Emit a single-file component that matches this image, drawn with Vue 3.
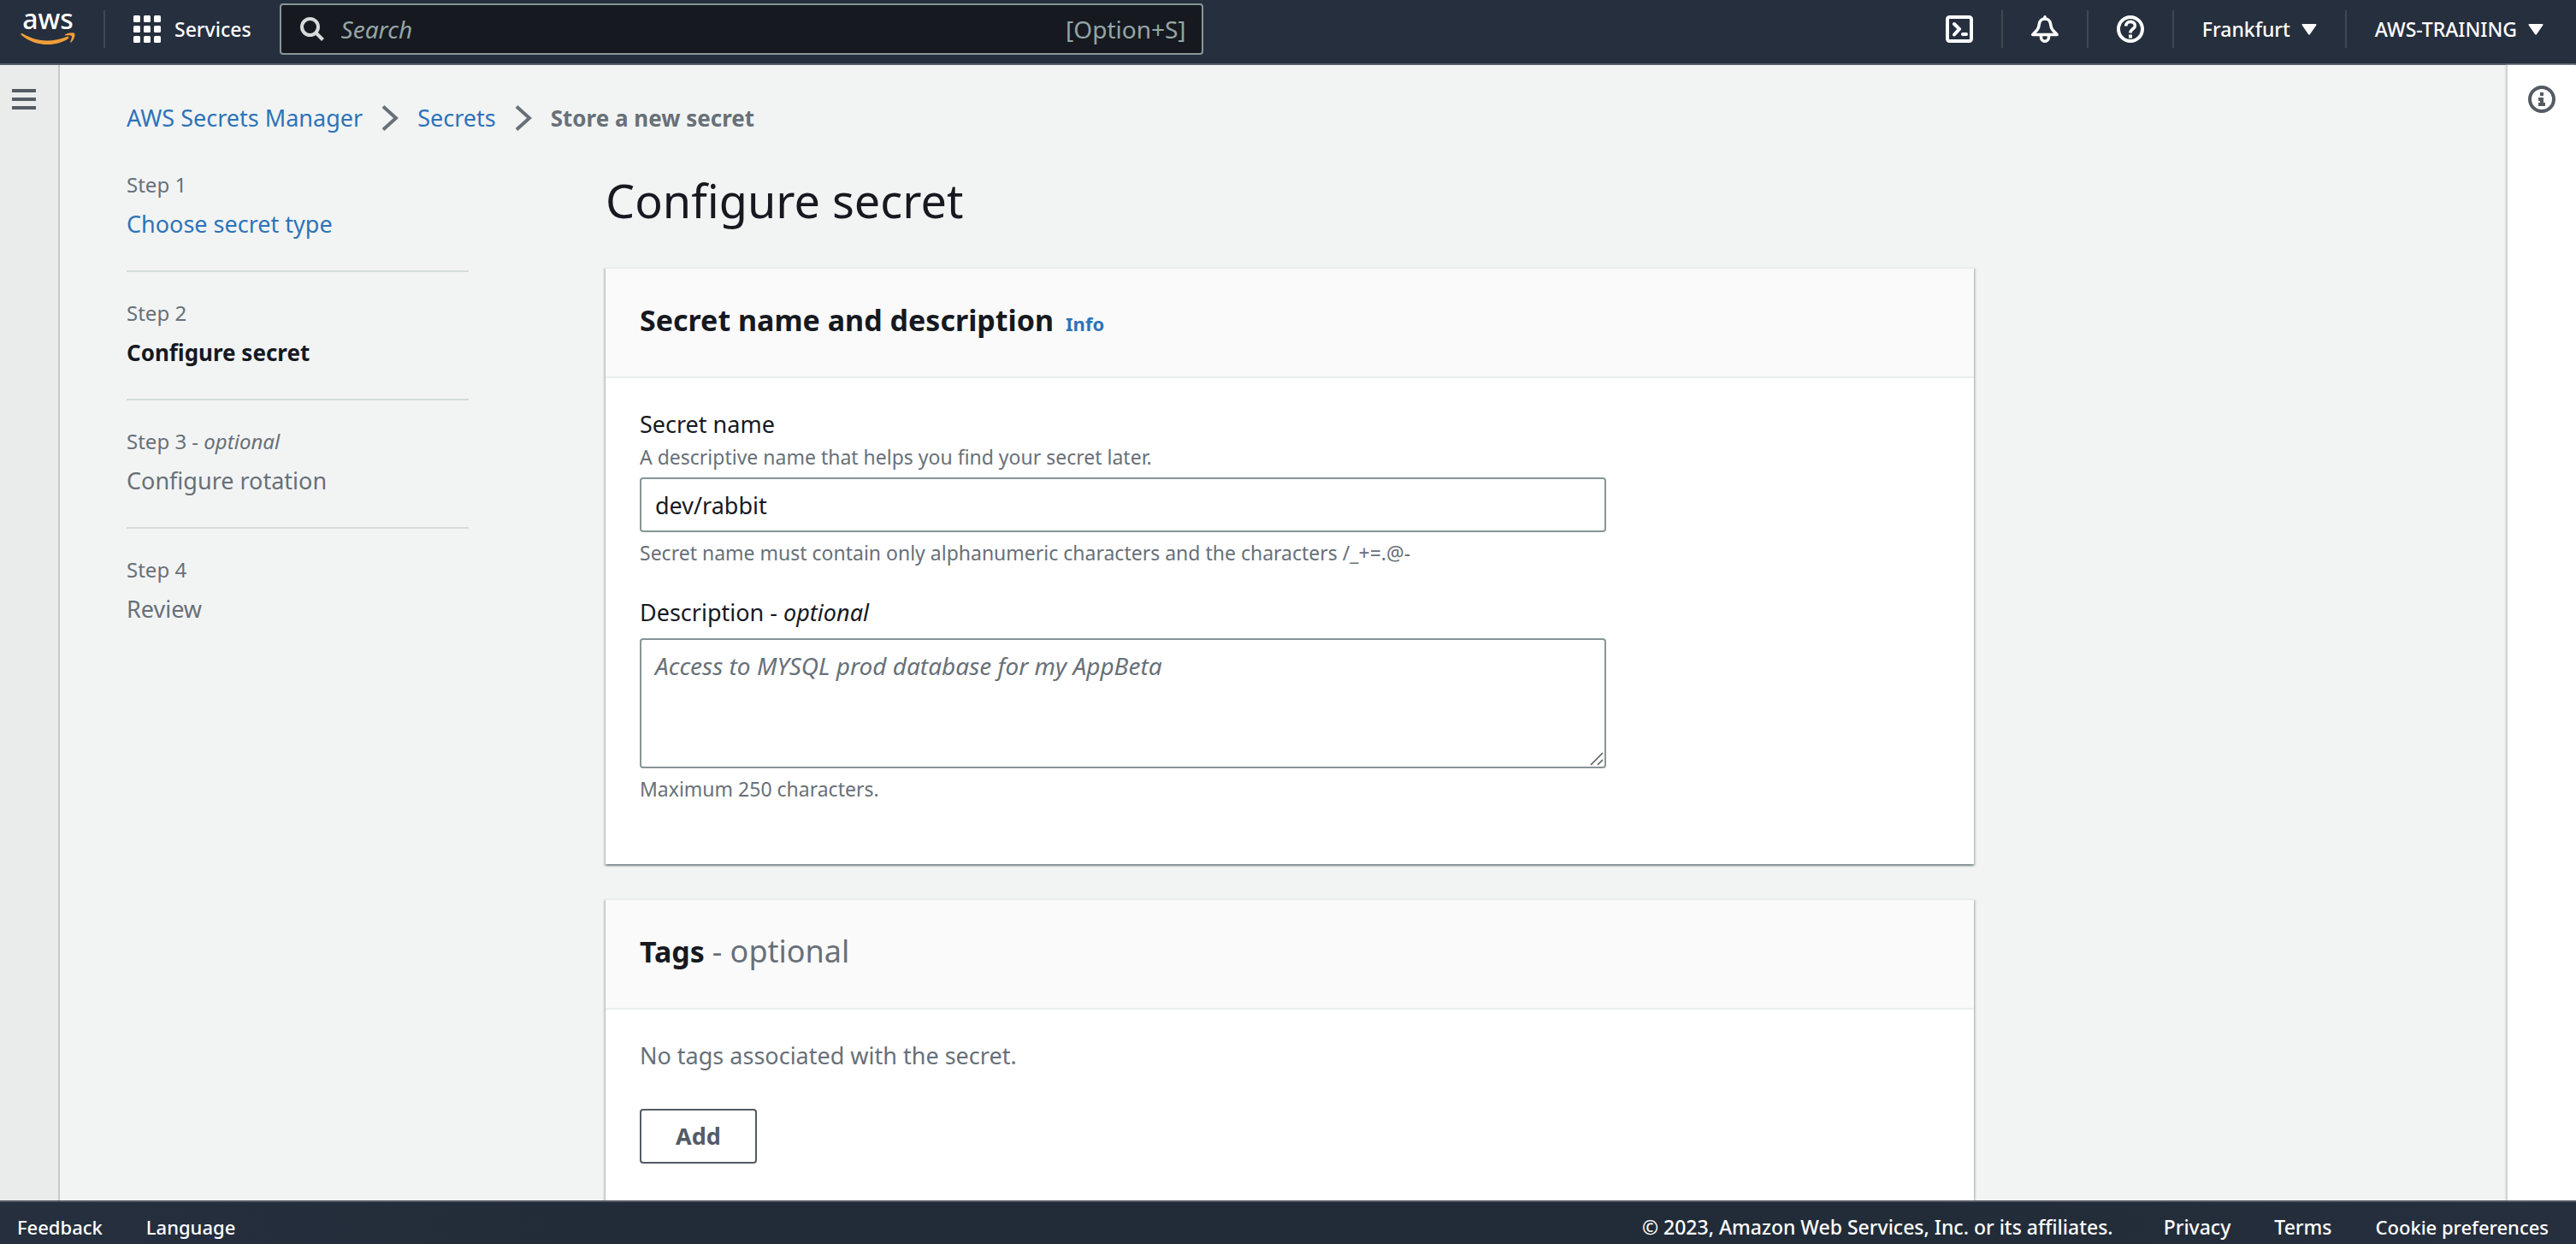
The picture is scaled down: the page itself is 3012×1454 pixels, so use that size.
<script setup>
import { ref } from 'vue'

const secretName = ref('dev/rabbit')
const description = ref('')
const search = ref('')

const steps = [
  { label: 'Step 1', title: 'Choose secret type', state: 'done' },
  { label: 'Step 2', title: 'Configure secret', state: 'current' },
  { label: 'Step 3', optional: true, title: 'Configure rotation', state: 'todo' },
  { label: 'Step 4', title: 'Review', state: 'todo' }
]
</script>

<template>
  <div class="console">
    <header class="topbar">
      <a href="#" class="logo" aria-label="AWS home">
        <span class="logo-text">aws</span>
        <svg class="smile" viewBox="0 0 64 16" aria-hidden="true">
          <path d="M.5 2.200C.2.900 1.300.7 2.300 1.300 12 6.800 21 9.500 31 9.500c8 0 16-1.700 23.500-4.700 1.800-.6 3 1 1.500 2.200C49.500 11.700 40.500 14 32 14 20 14 9 9.800 1 2.900z" fill="#f19e38" />
          <path d="M52 2.600C55.500.2 61.800-.2 63 1c1.300 1.500 0 7.300-3.600 10.300-.8.6-1.500.2-1.200-.6.900-2.200 2.300-5.600 1.500-6.700-.9-1.100-4.700-.7-7.200-.4-.8 0-1-.6-.5-1z" fill="#f19e38" />
        </svg>
      </a>
      <span class="divider"></span>
      <button type="button" class="nav-btn services">
        <svg class="icon-32" viewBox="0 0 32 32" aria-hidden="true" fill="#fff">
          <template v-for="r in 3" :key="r">
            <rect v-for="c in 3" :key="c" :x="(c - 1) * 12" :y="(r - 1) * 12" width="8" height="8" rx="1.500" />
          </template>
        </svg>
        Services
      </button>
      <label class="search">
        <svg class="icon-28" viewBox="0 0 28 28" aria-hidden="true" fill="none" stroke="#d5dbdb" stroke-width="4">
          <circle cx="11.500" cy="11.500" r="9.500" />
          <path d="M18 18l8.500 8.500" />
        </svg>
        <input v-model="search" type="text" placeholder="Search" aria-label="Search" />
        <span>[Option+S]</span>
      </label>
      <nav class="tools" aria-label="Account">
        <button type="button" class="nav-btn" aria-label="CloudShell">
          <svg class="icon-32" viewBox="0 0 32 32" fill="none" stroke="#fff" stroke-width="4" stroke-linejoin="round" stroke-linecap="round">
            <rect x="2" y="2" width="28" height="28" rx="2.500" />
            <path d="M10 10l6 6-6 6.500" />
            <path d="M20 22h4" />
          </svg>
        </button>
        <span class="divider"></span>
        <button type="button" class="nav-btn" aria-label="Notifications">
          <svg class="icon-32" viewBox="0 0 32 32" fill="none" stroke="#fff" stroke-width="3.500" stroke-linejoin="round" stroke-linecap="round">
            <path d="M16 1.800v2" />
            <path d="M16 4c-3.800 0-6.200 2.600-6.600 6-.4 3.600-.9 5.200-2.400 7L1.800 22.400h28.400L25 17c-1.500-1.800-2-3.400-2.400-7-.4-3.400-2.800-6-6.600-6z" />
            <path d="M11.500 23v2.500a4.500 4.800 0 0 0 9 0V23" />
          </svg>
        </button>
        <span class="divider"></span>
        <button type="button" class="nav-btn" aria-label="Help">
          <svg class="icon-32" viewBox="0 0 32 32" fill="none" stroke="#fff">
            <circle cx="16" cy="16" r="14" stroke-width="4" />
            <path d="M10.800 12.500c0-7 10.600-6.500 10.600-.6 0 4.200-5.400 3.600-5.400 8.600" stroke-width="3.600" />
            <path d="M14 22.500h4v4h-4z" fill="#fff" stroke="none" />
          </svg>
        </button>
        <span class="divider"></span>
        <button type="button" class="nav-btn menu">
          Frankfurt
          <svg class="caret" viewBox="0 0 18 13" aria-hidden="true"><path d="M1.500 0h15q1.500 0 .8 1.500L10 12q-1 1.500-2 0L.7 1.500Q0 0 1.500 0z" fill="#fff" /></svg>
        </button>
        <span class="divider"></span>
        <button type="button" class="nav-btn menu">
          AWS-TRAINING
          <svg class="caret" viewBox="0 0 18 13" aria-hidden="true"><path d="M1.500 0h15q1.500 0 .8 1.500L10 12q-1 1.500-2 0L.7 1.500Q0 0 1.500 0z" fill="#fff" /></svg>
        </button>
      </nav>
    </header>

    <div class="body">
      <aside class="rail rail-left">
        <button type="button" aria-label="Open navigation">
          <svg class="burger" viewBox="0 0 28 24" fill="#545b64"><path d="M0 0h28v4H0zM0 10h28v4H0zM0 20h28v4H0z" /></svg>
        </button>
      </aside>

      <div class="content">
        <nav class="crumbs" aria-label="Breadcrumb">
          <a href="#">AWS Secrets Manager</a>
          <svg class="chevron" viewBox="0 0 20 30" fill="none" stroke="#687078" stroke-width="4"><path d="M2 1.500L17 15 2 28.500" /></svg>
          <a href="#">Secrets</a>
          <svg class="chevron" viewBox="0 0 20 30" fill="none" stroke="#687078" stroke-width="4"><path d="M2 1.500L17 15 2 28.500" /></svg>
          <strong>Store a new secret</strong>
        </nav>

        <div class="wizard">
          <ol class="steps">
            <li v-for="step in steps" :key="step.label">
              <small>{{ step.label }}<template v-if="step.optional"> - <em>optional</em></template></small>
              <a v-if="step.state === 'done'" href="#">{{ step.title }}</a>
              <span v-else :class="step.state">{{ step.title }}</span>
            </li>
          </ol>

          <main class="form">
            <h1>Configure secret</h1>

            <section class="card">
              <header class="card-head">
                <h2>Secret name and description</h2>
                <a href="#" class="info">Info</a>
              </header>
              <div class="card-body">
                <div class="field">
                  <label for="secret-name">Secret name</label>
                  <p class="hint">A descriptive name that helps you find your secret later.</p>
                  <input id="secret-name" v-model="secretName" type="text" class="control" />
                  <p class="note">Secret name must contain only alphanumeric characters and the characters /_+=.@-</p>
                </div>
                <div class="field">
                  <label for="description">Description - <em>optional</em></label>
                  <div class="area">
                    <textarea id="description" v-model="description" class="control" placeholder="Access to MYSQL prod database for my AppBeta"></textarea>
                    <svg class="grip" viewBox="0 0 16 16" fill="none" stroke="#555" stroke-width="1.500"><path d="M1 15L15 1M9 15l6-6" /></svg>
                  </div>
                  <p class="note">Maximum 250 characters.</p>
                </div>
              </div>
            </section>

            <section class="card">
              <header class="card-head">
                <h2>Tags <span>- optional</span></h2>
              </header>
              <div class="card-body">
                <p class="empty">No tags associated with the secret.</p>
                <button type="button" class="add">Add</button>
              </div>
            </section>
          </main>
        </div>
      </div>

      <aside class="rail rail-right">
        <button type="button" aria-label="Open help panel">
          <svg class="icon-32" viewBox="0 0 32 32">
            <circle cx="16" cy="16" r="14" fill="none" stroke="#545b64" stroke-width="4" />
            <path d="M14 8h4v4h-4zM12 14h6v6h2v4h-8v-4h2v-2h-2z" fill="#545b64" />
          </svg>
        </button>
      </aside>
    </div>

    <footer class="footer">
      <button type="button">Feedback</button>
      <button type="button">Language</button>
      <span class="copyright">© 2023, Amazon Web Services, Inc. or its affiliates.</span>
      <a href="#" class="legal">Privacy</a>
      <a href="#" class="legal">Terms</a>
      <a href="#">Cookie preferences</a>
    </footer>
  </div>
</template>

<style>
body {
  margin: 0;
  background: #f2f3f3;
}
</style>

<style scoped>
* {
  box-sizing: border-box;
}

.console {
  display: flex;
  flex-direction: column;
  height: 100vh;
  overflow: hidden;
  background: #f2f4f4;
  color: #16191f;
  font-family: "Noto Sans", "Open Sans", sans-serif;
  font-size: 27px;
  line-height: 44px;
}

button {
  margin: 0;
  padding: 0;
  border: 0;
  background: none;
  color: inherit;
  font: inherit;
  cursor: pointer;
}

a {
  color: #2e73b8;
  text-decoration: none;
}

p,
h1,
h2 {
  margin: 0;
}

svg {
  display: block;
  flex: none;
}

.icon-32 {
  width: 32px;
  height: 32px;
}

.icon-28 {
  width: 28px;
  height: 28px;
}

/* Top bar */
.topbar {
  display: flex;
  flex: none;
  align-items: center;
  height: 76px;
  padding: 0 38px 6px 24px;
  border-bottom: 2px solid #545b64;
  background: #262f3e;
  color: #fff;
  font-size: 23px;
  font-weight: 500;
}

.logo {
  display: flex;
  flex-direction: column;
  align-self: flex-start;
  align-items: center;
  width: 64px;
  margin-right: 33px;
  color: #fff;
}

.logo-text {
  font-size: 32px;
  line-height: 44px;
}

.smile {
  width: 64px;
  height: 16px;
  margin-top: -6px;
}

.divider {
  flex: none;
  width: 2px;
  height: 44px;
  background: #414750;
}

.nav-btn {
  display: flex;
  align-items: center;
  white-space: nowrap;
}

.services {
  gap: 16px;
  margin: 0 33px;
}

.search {
  display: flex;
  align-items: center;
  width: 1080px;
  height: 60px;
  padding: 0 18px 0 22px;
  border: 2px solid #879596;
  border-radius: 4px;
  background: #16191f;
  color: #95a5a6;
  font-size: 28px;
  font-weight: 400;
}

.search input {
  flex: 1;
  min-width: 0;
  padding: 0 20px;
  border: 0;
  outline: 0;
  background: none;
  color: inherit;
  font: inherit;
}

.search input::placeholder {
  color: #95a5a6;
  font-style: italic;
  opacity: 1;
}

.tools {
  display: flex;
  align-items: center;
  gap: 33px;
  margin-left: auto;
}

.menu {
  gap: 13px;
}

.caret {
  width: 18px;
  height: 13px;
}

/* Page frame */
.body {
  display: flex;
  flex: 1;
  min-height: 0;
}

.rail {
  display: flex;
  flex: none;
  justify-content: center;
  align-items: flex-start;
  padding-top: 24px;
}

.rail-left {
  width: 70px;
  padding-top: 28px;
  padding-right: 12px;
  border-right: 2px solid #c6cacb;
  background: #eaecec;
}

.rail-right {
  width: 81px;
  border-left: 1px solid #d0d4d5;
  background: #fff;
  box-shadow: -1px 0 2px #c3c8c9;
}

.burger {
  width: 28px;
  height: 24px;
}

.content {
  flex: 1;
  min-width: 0;
  padding: 40px 78px 0;
  overflow: hidden;
}

.crumbs {
  display: flex;
  align-items: center;
  gap: 22px;
}

.crumbs strong {
  color: #687078;
  font-size: 26px;
}

.chevron {
  width: 20px;
  height: 30px;
}

.wizard {
  display: flex;
  gap: 160px;
  padding-top: 34px;
}

/* Steps */
.steps {
  flex: none;
  width: 400px;
  margin: 0;
  padding: 0;
  list-style: none;
}

.steps li {
  display: flex;
  flex-direction: column;
  gap: 2px;
  height: 124px;
  margin-bottom: 26px;
  border-bottom: 2px solid #d5dbdb;
  color: #687078;
}

.steps li:last-child {
  border-bottom: 0;
}

.steps small {
  font-size: 24px;
}

.steps .current {
  color: #16191f;
  font-size: 26px;
  font-weight: 700;
}

/* Form */
.form {
  flex: 1;
  max-width: 1600px;
}

h1 {
  font-size: 54px;
  font-weight: 400;
  line-height: 80px;
}

.card {
  margin-bottom: 40px;
  border-top: 2px solid #eaeded;
  background: #fff;
  box-shadow: 0 2px 2px rgba(0, 28, 36, 0.3), 2px 2px 2px rgba(0, 28, 36, 0.15), -2px 2px 2px rgba(0, 28, 36, 0.15);
}

h1 + .card {
  margin-top: 38px;
}

.card-head {
  display: flex;
  align-items: baseline;
  gap: 14px;
  padding: 36px 40px 42px;
  border-bottom: 2px solid #eaeded;
  background: #fafafa;
}

h2 {
  font-size: 34px;
  line-height: 48px;
}

h2 span {
  color: #687078;
  font-size: 36px;
  font-weight: 400;
  line-height: 1;
}

.info {
  font-size: 22px;
  font-weight: 700;
  line-height: 32px;
}

.card-body {
  padding: 32px 40px 72px;
}

.field {
  display: flex;
  flex-direction: column;
  max-width: 1130px;
}

.field + .field {
  margin-top: 32px;
}

.hint,
.note {
  color: #687078;
  font-size: 23px;
  line-height: 32px;
}

.hint {
  margin-bottom: 8px;
}

.note {
  margin-top: 8px;
}

.control {
  display: block;
  width: 100%;
  height: 64px;
  padding: 0 16px;
  border: 2px solid #879596;
  border-radius: 4px;
  outline: 0;
  background: #fff;
  color: #16191f;
  font: inherit;
}

.area {
  position: relative;
  margin-top: 8px;
}

textarea.control {
  height: 152px;
  padding: 8px 16px;
  font-size: 28px;
  resize: none;
}

textarea::placeholder {
  color: #687078;
  font-style: italic;
  opacity: 1;
}

.grip {
  position: absolute;
  right: 3px;
  bottom: 3px;
  width: 16px;
  height: 16px;
}

.empty {
  margin-bottom: 40px;
  color: #687078;
}

.add {
  height: 64px;
  padding: 0 40px;
  border: 2px solid #545b64;
  border-radius: 4px;
  color: #545b64;
  font-weight: 700;
}

/* Footer */
.footer {
  display: flex;
  flex: none;
  align-items: center;
  gap: 51px;
  height: 51px;
  padding: 9px 32px 0 20px;
  border-top: 2px solid #545b64;
  background: linear-gradient(90deg, #262f3e, #222c38 25%, #222c38 75%, #262f3e);
  color: #fff;
  font-size: 22px;
  font-weight: 500;
  line-height: 32px;
  white-space: nowrap;
}

.footer a {
  color: #fff;
}

.copyright,
.legal {
  font-size: 23px;
}

.copyright {
  margin-left: auto;
  padding-right: 8px;
}
</style>
